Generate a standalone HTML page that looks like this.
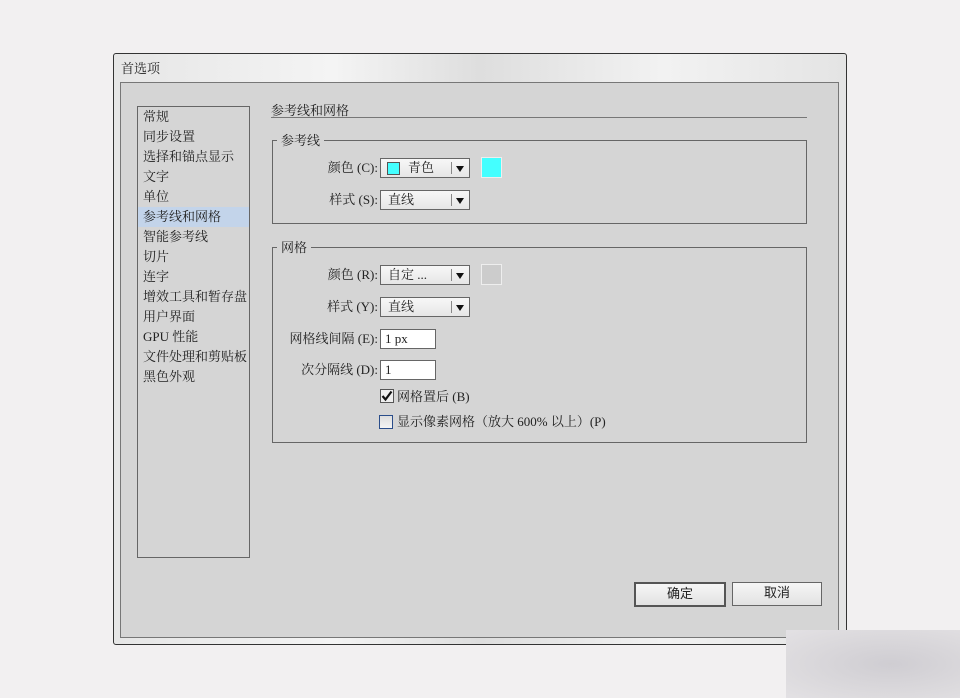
<!DOCTYPE html>
<html><head><meta charset="utf-8"><style>
*{margin:0;padding:0;box-sizing:border-box}
body{width:960px;height:698px;background:#f2f0f1;position:relative;overflow:hidden;font-family:"Liberation Serif","Noto Serif CJK SC","WenQuanYi Zen Hei",serif;font-size:12px;color:#222}
.abs{position:absolute}
.win{left:113px;top:53px;width:734px;height:592px;border:1px solid #333;border-radius:3px;background:linear-gradient(90deg,#e6e6e6,#f4f4f4 30%,#dedede 50%,#f2f2f2 75%,#e4e4e4)}
.inner{left:120px;top:82px;width:719px;height:556px;background:#d5d5d5;border:1px solid #777}
.t{white-space:nowrap;line-height:14px}
.list{left:137px;top:106px;width:113px;height:452px;border:1px solid #666;background:#d5d5d5}
.list div{height:20px;line-height:20px;padding-left:5px;font-size:13px}
.sel{background:#c3d4ea}
.grp{border:1px solid #666}
.gl{background:#d5d5d5;padding:0 4px;font-size:13px}
.dd{border:1px solid #666;background:linear-gradient(#f7f7f7,#e6e6e6);height:20px;font-size:13px}
.dd .sep{position:absolute;right:17px;top:3px;width:1px;height:12px;background:#888}
.dd .arr{position:absolute;right:5px;top:7px;width:0;height:0;border-left:4px solid transparent;border-right:4px solid transparent;border-top:6px solid #111}
.inp{border:1px solid #666;background:#fff;height:20px;font-size:13px;padding-left:4px;line-height:18px}
.lbl{font-size:13px;text-align:right}
.btn{border:1px solid #666;background:linear-gradient(#f6f6f6,#e2e2e2);text-align:center;line-height:20px;font-size:13px;font-family:"Liberation Sans","Noto Sans CJK SC",sans-serif}
</style></head><body>
<div class="abs win"></div>
<div class="abs t" style="left:121px;top:62px;font-size:13px">首选项</div>
<div class="abs inner"></div>
<div class="abs list">
<div>常规</div><div>同步设置</div><div>选择和锚点显示</div><div>文字</div><div>单位</div><div class="sel">参考线和网格</div><div>智能参考线</div><div>切片</div><div>连字</div><div>增效工具和暂存盘</div><div>用户界面</div><div>GPU 性能</div><div>文件处理和剪贴板</div><div>黑色外观</div>
</div>
<div class="abs t" style="left:271px;top:104px;font-size:13px">参考线和网格</div>
<div class="abs" style="left:271px;top:117px;width:536px;height:1px;background:#777"></div>

<div class="abs grp" style="left:272px;top:140px;width:535px;height:84px"></div>
<div class="abs t gl" style="left:277px;top:134px">参考线</div>
<div class="abs t lbl" style="left:290px;top:161px;width:88px">颜色 (C):</div>
<div class="abs dd" style="left:380px;top:158px;width:90px"><div class="abs" style="left:6px;top:3px;width:13px;height:13px;background:#4ff;border:1px solid #555"></div><span class="abs t" style="left:27px;top:2px">青色</span><div class="sep"></div><div class="arr"></div></div>
<div class="abs" style="left:481px;top:157px;width:21px;height:21px;background:#4ff;border:1px solid #eee"></div>
<div class="abs t lbl" style="left:290px;top:193px;width:88px">样式 (S):</div>
<div class="abs dd" style="left:380px;top:190px;width:90px"><span class="abs t" style="left:7px;top:2px">直线</span><div class="sep"></div><div class="arr"></div></div>

<div class="abs grp" style="left:272px;top:247px;width:535px;height:196px"></div>
<div class="abs t gl" style="left:277px;top:241px">网格</div>
<div class="abs t lbl" style="left:290px;top:268px;width:88px">颜色 (R):</div>
<div class="abs dd" style="left:380px;top:265px;width:90px"><span class="abs t" style="left:7px;top:2px">自定 ...</span><div class="sep"></div><div class="arr"></div></div>
<div class="abs" style="left:481px;top:264px;width:21px;height:21px;background:#ccc;border:1px solid #eee"></div>
<div class="abs t lbl" style="left:290px;top:300px;width:88px">样式 (Y):</div>
<div class="abs dd" style="left:380px;top:297px;width:90px"><span class="abs t" style="left:7px;top:2px">直线</span><div class="sep"></div><div class="arr"></div></div>
<div class="abs t lbl" style="left:270px;top:332px;width:108px">网格线间隔 (E):</div>
<div class="abs inp" style="left:380px;top:329px;width:56px">1 px</div>
<div class="abs t lbl" style="left:270px;top:363px;width:108px">次分隔线 (D):</div>
<div class="abs inp" style="left:380px;top:360px;width:56px">1</div>
<svg class="abs" style="left:380px;top:389px" width="14" height="14" viewBox="0 0 14 14"><rect x="0.5" y="0.5" width="13" height="13" fill="#eee" stroke="#555"/><path d="M2.5 7 L5.5 10.5 L11.5 2.5" fill="none" stroke="#111" stroke-width="2.2"/></svg>
<div class="abs t" style="left:397px;top:390px;font-size:13px">网格置后 (B)</div>
<div class="abs" style="left:379px;top:415px;width:14px;height:14px;border:1px solid #2a4d8a;background:linear-gradient(#ddd,#f4f4f4)"></div>
<div class="abs t" style="left:397px;top:415px;font-size:13px">显示像素网格（放大 600% 以上）(P)</div>

<div class="abs btn" style="left:634px;top:582px;width:92px;height:25px;border:2px solid #555">确定</div>
<div class="abs btn" style="left:732px;top:582px;width:90px;height:24px">取消</div>
<div class="abs" style="left:786px;top:630px;width:174px;height:68px;background:radial-gradient(ellipse at 60% 50%,#cfcdd2,#dddbde 70%,#e3e1e4)"></div>
</body></html>
